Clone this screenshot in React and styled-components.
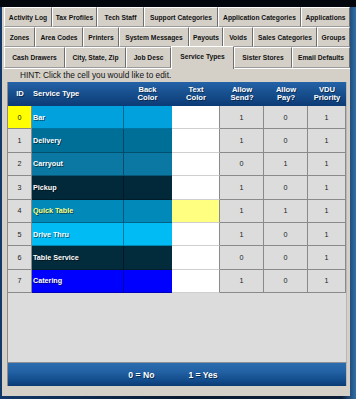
import styled, { createGlobalStyle } from 'styled-components';

const GlobalStyle = createGlobalStyle`
  html, body {
    margin: 0;
    padding: 0;
    height: 399px;
    overflow: hidden;
  }
  body {
    background:
      linear-gradient(to bottom, #03060c 0, #03060c 7px, transparent 7px),
      linear-gradient(to right, #12386a 0, #0a1a30 50%, #0c1e38 96%, #3270aa 100%);
    font-family: "Liberation Sans", Arial, sans-serif;
  }
`

const Window = styled.div`
  box-sizing: border-box;
  margin: 7px 0 0 2px;
  width: 348px;
  height: 389px;
  padding-left: 2px;
  background: #d4d0c8;
  display: flex;
  flex-direction: column;
`

const TabRow = styled.div`
  display: flex;
  height: ${p => p.h}px;
  align-items: flex-end;
`

const Tab = styled.div`
  box-sizing: border-box;
  width: ${p => p.w}px;
  height: ${p => p.active ? p.h + 2 : p.h}px;
  margin-bottom: ${p => p.active ? -1 : 0}px;
  position: relative;
  z-index: ${p => p.active ? 2 : 0};
  display: flex;
  align-items: center;
  justify-content: center;
  padding-bottom: ${p => p.active ? 3 : 0}px;
  background: #d4d0c8;
  border-top: 1px solid #ffffff;
  border-left: 1px solid #ffffff;
  border-right: 1px solid #6e6e6e;
  border-bottom: ${p => p.active ? 'none' : '1px solid #9a9a9a'};
  font-size: 6.7px;
  font-weight: bold;
  color: #111;
  white-space: nowrap;
`

const Panel = styled.div`
  flex: 1;
  display: flex;
  flex-direction: column;
  border-top: 1px solid #ffffff;
  padding: 0 3px 10px 3px;
`

const Hint = styled.div`
  height: 13px;
  line-height: 13px;
  padding-left: 13px;
  font-size: 8.3px;
  color: #111;
`

const GridArea = styled.div`
  flex: 1;
  background: #dcdcdc;
  border-left: 1px solid #8c8c8c;
  border-right: 1px solid #b8b8b8;
  display: grid;
  grid-template-columns: 24px 91px 49px 48px 44px 44px 38px;
  grid-template-rows: 24px repeat(8, 23.375px) 1fr;
`

const HeadCell = styled.div`
  background: linear-gradient(to bottom, #2463a8 0%, #18508f 45%, #0c3b76 100%);
  color: #fff;
  font-weight: bold;
  font-size: 7.6px;
  line-height: 8.5px;
  display: flex;
  align-items: center;
  justify-content: ${p => p.left ? 'flex-start' : 'center'};
  padding-left: ${p => p.left ? 1 : 0}px;
  text-align: center;
  text-shadow: 1px 1px 0 rgba(0, 0, 0, 0.45);
`

const IdCell = styled.div`
  box-sizing: border-box;
  background: ${p => p.hot ? '#ffff00' : '#dcdcdc'};
  border-right: 1px solid #8a8a8a;
  border-bottom: 1px solid #8a8a8a;
  display: flex;
  align-items: center;
  justify-content: center;
  font-size: 7.2px;
  color: #222;
`

const NameCell = styled.div`
  box-sizing: border-box;
  background: ${p => p.bg};
  border-bottom: 1px solid rgba(0, 0, 0, 0.28);
  display: flex;
  align-items: center;
  padding-left: 1px;
  font-weight: bold;
  font-size: 7.2px;
  color: ${p => p.fg};
  text-shadow: 1px 1px 0 rgba(0, 0, 0, 0.55);
`

const SwatchCell = styled.div`
  box-sizing: border-box;
  background: ${p => p.bg};
  border-left: 1px solid rgba(0, 0, 0, 0.35);
  border-bottom: 1px solid rgba(0, 0, 0, 0.28);
`

const TextColorCell = styled.div`
  box-sizing: border-box;
  background: ${p => p.bg};
  border-bottom: 1px solid #cfcfcf;
  border-right: 1px solid #8a8a8a;
`

const NumCell = styled.div`
  box-sizing: border-box;
  background: #dcdcdc;
  border-right: 1px solid #8a8a8a;
  border-bottom: 1px solid #8a8a8a;
  display: flex;
  align-items: center;
  justify-content: center;
  font-size: 7.2px;
  color: #222;
`

const Footer = styled.div`
  height: 24px;
  background: linear-gradient(to bottom, #2b6db0 0%, #2160a3 40%, #134c8c 75%, #0b3a74 100%);
  border-left: 1px solid #8c8c8c;
  border-right: 1px solid #b8b8b8;
  border-top: 1px solid #8a8f98;
  box-sizing: border-box;
  display: flex;
  justify-content: center;
  align-items: center;
  gap: 34px;
  padding-right: 8px;
  font-weight: bold;
  font-size: 8.6px;
  color: #fff;
  text-shadow: 1px 1px 0 rgba(0, 0, 0, 0.5);
`

const tabRows = [
    {h: 20, tabs: [['Activity Log', 48], ['Tax Profiles', 45], ['Tech Staff', 47], ['Support Categories', 74], ['Application Categories', 83], ['Applications', 49]]},
    {h: 20, tabs: [['Zones', 31], ['Area Codes', 48], ['Printers', 36], ['System Messages', 70], ['Payouts', 34], ['Voids', 30], ['Sales Categories', 64], ['Groups', 33]]},
    {h: 21, tabs: [['Cash Drawers', 61], ['City, State, Zip', 61], ['Job Desc', 45], ['Service Types', 63, true], ['Sister Stores', 58], ['Email Defaults', 58]]},
]

const serviceTypes = [
    {id: 0, name: 'Bar', bg: '#00a1dc', text: '#ffffff', send: 1, pay: 0, vdu: 1},
    {id: 1, name: 'Delivery', bg: '#006f98', text: '#ffffff', send: 1, pay: 0, vdu: 1},
    {id: 2, name: 'Carryout', bg: '#0a78a3', text: '#ffffff', send: 0, pay: 1, vdu: 1},
    {id: 3, name: 'Pickup', bg: '#02293a', text: '#ffffff', send: 1, pay: 0, vdu: 1},
    {id: 4, name: 'Quick Table', bg: '#0089b9', text: '#ffff80', send: 1, pay: 1, vdu: 1},
    {id: 5, name: 'Drive Thru', bg: '#00bbf4', text: '#ffffff', send: 1, pay: 0, vdu: 1},
    {id: 6, name: 'Table Service', bg: '#022b3b', text: '#ffffff', send: 0, pay: 0, vdu: 1},
    {id: 7, name: 'Catering', bg: '#0000ff', text: '#ffffff', send: 1, pay: 0, vdu: 1},
]

export default function App() {
    return (
        <>
            <GlobalStyle/>
            <Window>
                {tabRows.map((row, i) => (
                    <TabRow key={i} h={row.h}>
                        {row.tabs.map(([label, w, active]) => (
                            <Tab key={label} w={w} h={row.h} active={active}>{label}</Tab>
                        ))}
                    </TabRow>
                ))}
                <Panel>
                    <Hint>HINT: Click the cell you would like to edit.</Hint>
                    <GridArea>
                        <HeadCell>ID</HeadCell>
                        <HeadCell left>Service Type</HeadCell>
                        <HeadCell>Back<br/>Color</HeadCell>
                        <HeadCell>Text<br/>Color</HeadCell>
                        <HeadCell>Allow<br/>Send?</HeadCell>
                        <HeadCell>Allow<br/>Pay?</HeadCell>
                        <HeadCell>VDU<br/>Priority</HeadCell>
                        {serviceTypes.map(s => [
                            <IdCell key={`id${s.id}`} hot={s.id === 0}>{s.id}</IdCell>,
                            <NameCell key={`n${s.id}`} bg={s.bg} fg={s.text}>{s.name}</NameCell>,
                            <SwatchCell key={`b${s.id}`} bg={s.bg}/>,
                            <TextColorCell key={`t${s.id}`} bg={s.text}/>,
                            <NumCell key={`s${s.id}`}>{s.send}</NumCell>,
                            <NumCell key={`p${s.id}`}>{s.pay}</NumCell>,
                            <NumCell key={`v${s.id}`}>{s.vdu}</NumCell>,
                        ])}
                    </GridArea>
                    <Footer>
                        <span>0 = No</span>
                        <span>1 = Yes</span>
                    </Footer>
                </Panel>
            </Window>
        </>
    )
}
